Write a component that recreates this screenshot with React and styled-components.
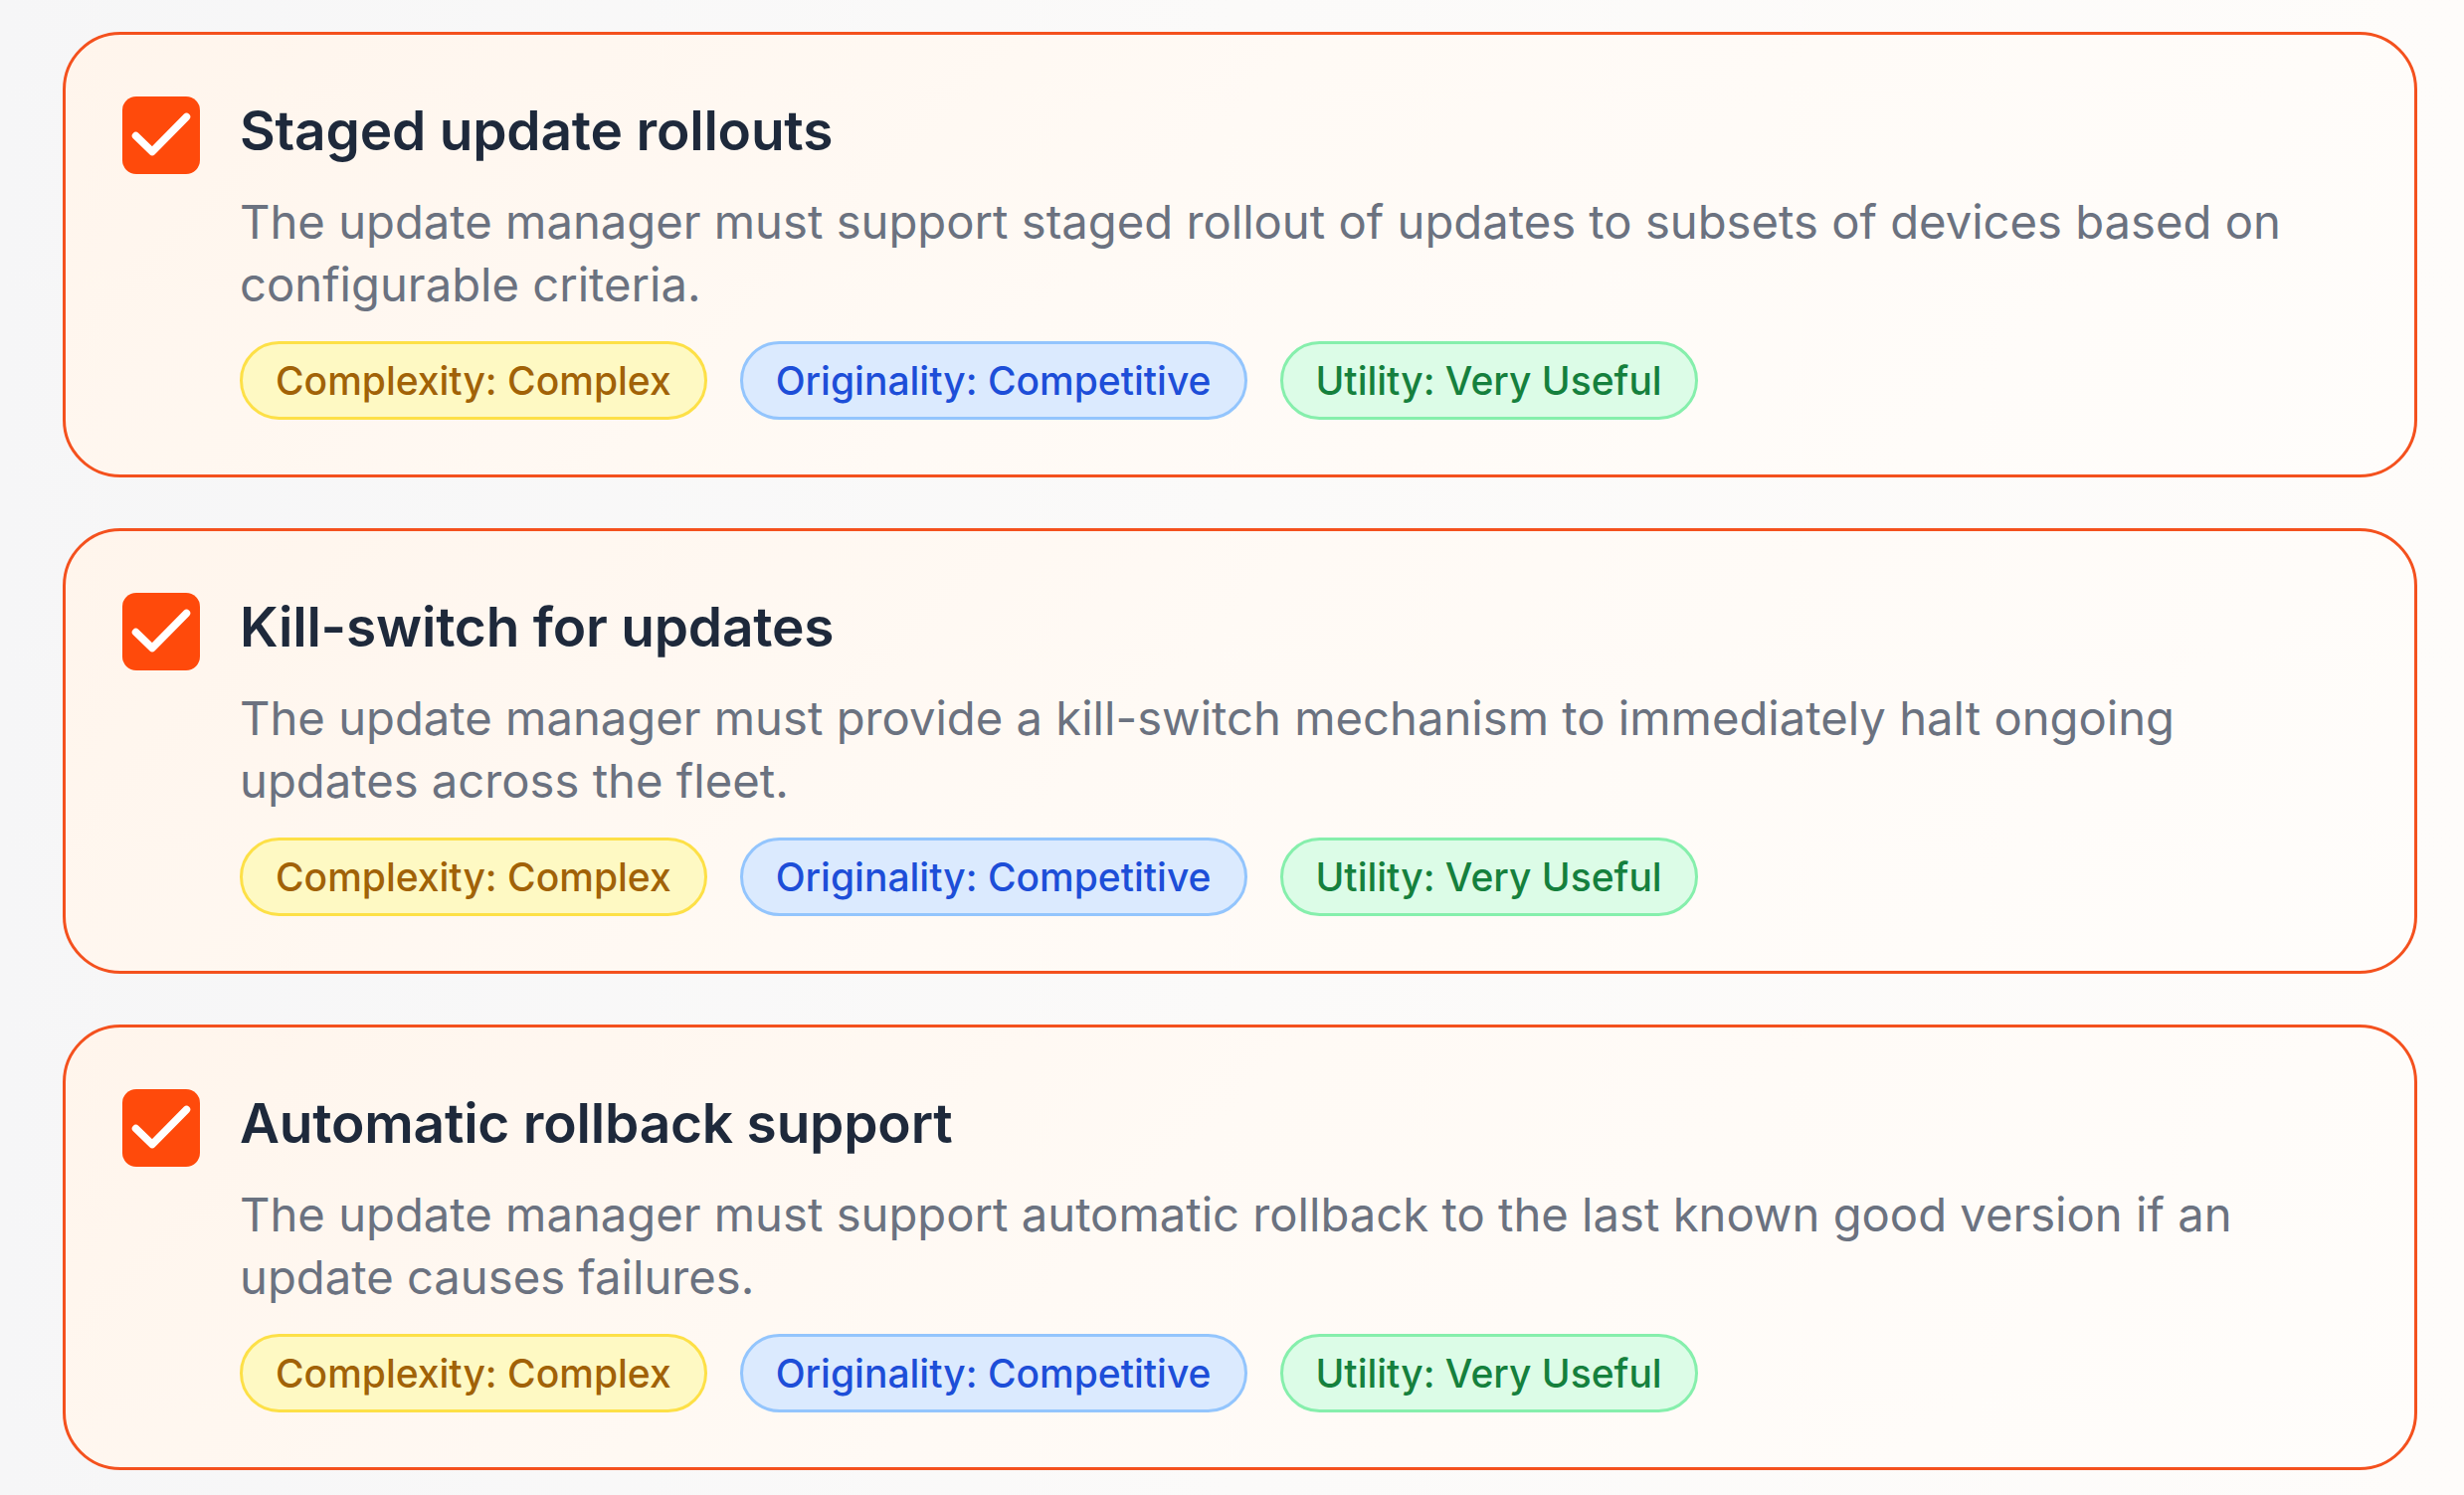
import React from "react";
import styled, { createGlobalStyle } from "styled-components";

const GlobalStyle = createGlobalStyle`
  html, body {
    margin: 0;
    padding: 0;
  }
  body {
    font-family: Inter, "Noto Sans", "Liberation Sans", sans-serif;
    background: linear-gradient(90deg, #f6f6f7 0%, #fbfaf9 50%, #fefcfa 100%);
    min-height: 100vh;
  }
`;

const Page = styled.main`
  display: flex;
  flex-direction: column;
  gap: 51px;
  padding: 32px 47px 20px 63px;
`;

const Card = styled.section`
  display: flex;
  align-items: flex-start;
  gap: 40px;
  padding: 62px 57px 55px 57px;
  border: 3px solid #f4511e;
  border-radius: 58px;
  background: linear-gradient(135deg, #fff5ec 0%, #fffaf5 45%, #fffdfb 100%);
`;

const CheckBox = styled.div`
  flex: none;
  width: 78px;
  height: 78px;
  border-radius: 14px;
  background: #ff4a0b;
  display: flex;
  align-items: center;
  justify-content: center;
`;

const Content = styled.div`
  flex: 1;
  min-width: 0;
  display: flex;
  flex-direction: column;
`;

const Title = styled.h3`
  margin: 0;
  font-size: 55px;
  line-height: 68px;
  font-weight: 600;
  color: #1e293b;
  letter-spacing: -0.2px;
`;

const Description = styled.p`
  margin: 26px 0 0;
  font-size: 47.2px;
  line-height: 63px;
  font-weight: 400;
  color: #6b7280;
`;

const Badges = styled.div`
  display: flex;
  flex-wrap: wrap;
  gap: 33px;
  margin-top: 26px;
`;

const palettes = {
  yellow: { bg: "#fef9c3", border: "#fde047", text: "#a16207" },
  blue: { bg: "#dbeafe", border: "#93c5fd", text: "#1d4ed8" },
  green: { bg: "#dcfce7", border: "#86efac", text: "#15803d" },
};

const Badge = styled.span`
  display: inline-flex;
  align-items: center;
  padding: 9px 33px;
  font-size: 39px;
  line-height: 55px;
  font-weight: 500;
  border-radius: 999px;
  border: 3px solid ${(p) => palettes[p.$tone].border};
  background: ${(p) => palettes[p.$tone].bg};
  color: ${(p) => palettes[p.$tone].text};
  white-space: nowrap;
`;

const CheckIcon = () => (
  <svg width="78" height="78" viewBox="0 0 78 78" fill="none">
    <path
      d="M13.5 39.5 L30 55.5 L64.5 20.5"
      stroke="#ffffff"
      strokeWidth="7.5"
      strokeLinecap="round"
      strokeLinejoin="round"
    />
  </svg>
);

const items = [
  {
    title: "Staged update rollouts",
    desc: "The update manager must support staged rollout of updates to subsets of devices based on configurable criteria.",
  },
  {
    title: "Kill-switch for updates",
    desc: "The update manager must provide a kill-switch mechanism to immediately halt ongoing updates across the fleet.",
  },
  {
    title: "Automatic rollback support",
    desc: "The update manager must support automatic rollback to the last known good version if an update causes failures.",
  },
];

export default function App() {
  return (
    <>
      <GlobalStyle />
      <Page>
        {items.map((it) => (
          <Card key={it.title}>
            <CheckBox>
              <CheckIcon />
            </CheckBox>
            <Content>
              <Title>{it.title}</Title>
              <Description>{it.desc}</Description>
              <Badges>
                <Badge $tone="yellow">Complexity: Complex</Badge>
                <Badge $tone="blue">Originality: Competitive</Badge>
                <Badge $tone="green">Utility: Very Useful</Badge>
              </Badges>
            </Content>
          </Card>
        ))}
      </Page>
    </>
  );
}
